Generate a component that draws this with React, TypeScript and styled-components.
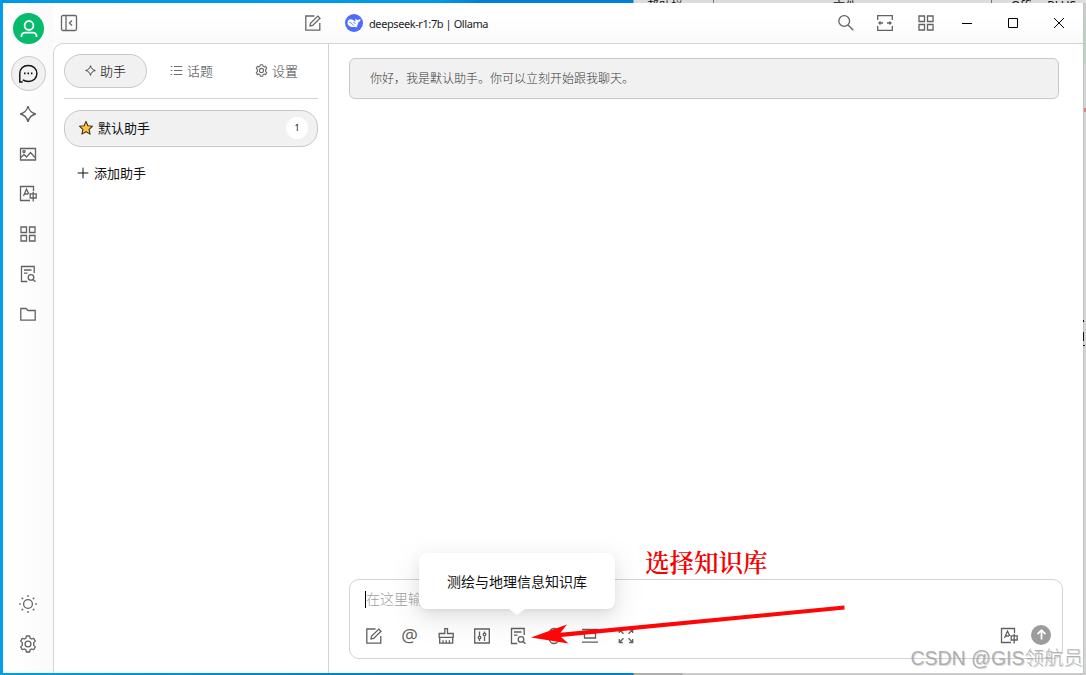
import React from 'react';
import styled, { createGlobalStyle } from 'styled-components';

const GlobalStyle = createGlobalStyle`
  * { box-sizing: border-box; }
  html, body { margin: 0; height: 100%; overflow: hidden; }
  body { font-family: "Noto Sans", "Noto Sans CJK SC", sans-serif; font-size: 13px; color: #111; }
`;

const Desktop = styled.div`
  position: relative;
  width: 1086px;
  height: 675px;
  padding: 3px;
  overflow: hidden;
  background: linear-gradient(90deg, #009fe8 0, #0092e2 300px, #007fd6 633px, #d4d6d5 634px);
`;

const Backdrop = styled.div<{ $top?: boolean }>`
  position: absolute;
  left: 0;
  right: 0;
  ${(p) => (p.$top ? 'top: 0;' : 'bottom: 0;')}
  height: ${(p) => (p.$top ? 3 : 2)}px;
  background: ${(p) =>
    p.$top
      ? 'linear-gradient(90deg, #0098e4 0, #009ae6 440px, #0080d8 480px, #0080d8 633px, #dcdcdc 634px)'
      : 'linear-gradient(90deg, #009fe4 0, #0080c8 400px, #0080c8 633px, #adadad 634px, #adadad 682px, #cbcbcb 683px)'};
`;

const BackText = styled.span<{ $x: number; $y: number }>`
  position: absolute;
  left: ${(p) => p.$x}px;
  top: ${(p) => p.$y}px;
  font-size: 12px;
  line-height: 14px;
  color: #111;
  white-space: nowrap;
`;

const BackRule = styled.i<{ $x: number }>`
  position: absolute;
  left: ${(p) => p.$x}px;
  top: 0;
  width: 1px;
  height: 3px;
  background: #777;
`;

const RightEdge = styled.div`
  position: absolute;
  right: 0;
  top: 3px;
  width: 3px;
  height: 670px;
  overflow: hidden;
  background: linear-gradient(#cccecd 0 14px, #bfd2c8 14px 61px, #d2d4d3 61px 105px, #d98488 105px 109px, #d3d5d4 109px);
  box-shadow: inset 1px 0 #c2c4c3;
`;

const EdgeText = styled.div`
  position: absolute;
  top: 314px;
  right: 0;
  width: 3px;
  height: 29px;
  background: linear-gradient(#111, #111) 0 3px / 1px 2px no-repeat,
    linear-gradient(#111, #111) 0 15px / 1px 9px no-repeat,
    linear-gradient(#111, #111) 0 28px / 2px 1px no-repeat;
`;

const Window = styled.main`
  position: relative;
  display: grid;
  grid-template: 40px 630px / 50px 1030px;
  width: 1080px;
  height: 670px;
  background: #fff;
`;

const Rail = styled.nav`
  grid-row: 1 / 3;
  display: flex;
  flex-direction: column;
  align-items: center;
  gap: 5px;
  padding: 9px 0 12px;
  background: linear-gradient(90deg, #fff 20%, #fafafa);
`;

const Avatar = styled.div`
  display: grid;
  place-items: center;
  flex: none;
  width: 31px;
  height: 31px;
  margin: 1px 0 7px 1px;
  border-radius: 50%;
  background: #06bb6b;
  color: #fff;
`;

const RailButton = styled.button<{ $active?: boolean }>`
  display: grid;
  place-items: center;
  width: 35px;
  height: 35px;
  flex: none;
  margin-left: 1px;
  padding: 0 1px 0 0;
  border: 1px solid ${(p) => (p.$active ? '#c8c8c8' : 'transparent')};
  border-radius: 50%;
  color: ${(p) => (p.$active ? '#111' : '#626262')};
  background: ${(p) => (p.$active ? '#f1f1f1' : 'transparent')};
`;

const Spacer = styled.div`
  flex: 1;
`;

const Header = styled.header`
  display: flex;
  align-items: center;
  background: linear-gradient(#fff 30%, #fafafa);
`;

const HeaderSide = styled.div`
  display: flex;
  align-items: center;
  justify-content: space-between;
  width: 276px;
  padding: 0 7px;
  color: #666;
`;

const ModelName = styled.div`
  display: flex;
  align-items: center;
  gap: 6px;
  padding-left: 16px;
  font-size: 11px;
  letter-spacing: -0.41px;
  color: #1b1b1b;
`;

const HeaderTools = styled.div`
  display: flex;
  align-items: center;
  margin-left: auto;
`;

const HeaderTool = styled.button<{ $w: number; $dark?: boolean }>`
  display: grid;
  place-items: center;
  width: ${(p) => p.$w}px;
  height: 40px;
  padding: 0;
  border: 0;
  background: none;
  color: ${(p) => (p.$dark ? '#000' : '#626262')};
`;

const Body = styled.div`
  display: grid;
  grid-template-columns: 275px 1fr;
  border: solid #d3d3d3;
  border-width: 1px 0 0 1px;
  border-top-left-radius: 10px;
  background: #fff;
`;

const SidePanel = styled.aside`
  padding: 10px 10px 0;
  border-right: 1px solid #d3d3d3;
`;

const Tabs = styled.div`
  display: flex;
  height: 45px;
  border-bottom: 1px solid #d3d3d3;
`;

const Tab = styled.button<{ $active?: boolean; $w: number }>`
  display: flex;
  align-items: center;
  justify-content: center;
  gap: 4px;
  width: ${(p) => p.$w}px;
  height: 34px;
  padding: 0 0 1px;
  border: 1px solid ${(p) => (p.$active ? '#c8c8c8' : 'transparent')};
  border-radius: 17px;
  background: ${(p) => (p.$active ? '#f1f1f1' : 'transparent')};
  color: ${(p) => (p.$active ? '#000' : '#3c3c3c')};
  font: inherit;
  font-weight: 300;
  svg { opacity: 0.75; }
`;

const AssistantRow = styled.div`
  display: flex;
  align-items: center;
  height: 37px;
  margin-top: 11px;
  padding: 0 9px 2px 13px;
  border: 1px solid #c8c8c8;
  border-radius: 17px;
  background: #f1f1f1;
  gap: 4px;
  svg { margin-top: 1px; }
`;

const Count = styled.span`
  display: grid;
  place-items: center;
  width: 22px;
  height: 22px;
  margin-left: auto;
  margin-top: 1px;
  padding-bottom: 1px;
  border-radius: 50%;
  background: #fff;
  font-size: 9px;
`;

const AddRow = styled.div`
  display: flex;
  align-items: center;
  gap: 5px;
  height: 34px;
  margin-top: 8px;
  padding-left: 13px;
  svg { margin-top: 1px; }
`;

const Chat = styled.section`
  display: flex;
  flex-direction: column;
  justify-content: space-between;
  padding: 14px 20px 14px;
`;

const Greeting = styled.div`
  width: 710px;
  height: 41px;
  padding-left: 20px;
  border: 1px solid #c9c9c9;
  border-radius: 6px;
  background: #f1f1f1;
  color: #3a3a3a;
  font-size: 12px;
  font-weight: 300;
  line-height: 39px;
`;

const Composer = styled.div`
  position: relative;
  width: 714px;
  height: 80px;
  padding: 11px 11px 0 15px;
  border: 1px solid #d3d3d3;
  border-radius: 10px;
`;

const Prompt = styled.div`
  height: 17px;
  border-left: 1px solid #000;
  color: #a0a0a0;
  font-size: 14px;
  font-weight: 300;
  line-height: 16px;
`;

const Toolbar = styled.div`
  display: flex;
  align-items: center;
  height: 34px;
  margin: 11px 0 0 -9.5px;
  color: #606060;
`;

const ToolButton = styled.button`
  display: grid;
  place-items: center;
  width: 36px;
  height: 34px;
  padding: 0;
  border: 0;
  background: none;
  color: inherit;
`;

const AtSign = styled.span`
  margin-top: -2px;
  font: 400 18.5px/18px "Open Sans", "Noto Sans", sans-serif;
`;

const Send = styled.div`
  display: grid;
  place-items: center;
  width: 20px;
  height: 20px;
  margin: -3px 0 0 4px;
  border-radius: 50%;
  background: #9c9c9c;
  color: #fff;
`;

const Popover = styled.div`
  position: absolute;
  left: 69px;
  top: -27px;
  width: 196px;
  height: 56px;
  border-radius: 8px;
  background: #fff;
  box-shadow: 0 6px 16px rgba(0, 0, 0, 0.08), 0 3px 6px -4px rgba(0, 0, 0, 0.12), 0 9px 28px 8px rgba(0, 0, 0, 0.05);
  font-size: 14px;
  line-height: 57px;
  text-align: center;
  &::after {
    content: '';
    position: absolute;
    left: 90px;
    top: 56px;
    border: solid transparent;
    border-width: 6px 8px 0;
    border-top-color: #fff;
  }
`;

const Annotation = styled.div`
  position: absolute;
  left: 645px;
  top: 544px;
  color: #f50000;
  font: 600 24.5px/36px "Noto Serif CJK SC", "Liberation Serif", "Noto Sans CJK SC", serif;
`;

const Pointer = styled.svg`
  position: absolute;
  left: 525px;
  top: 600px;
`;

const Watermark = styled.div`
  position: absolute;
  right: 3px;
  top: 644px;
  color: rgba(165, 165, 165, 0.85);
  font: 19.5px/28px "Liberation Sans", "Noto Sans CJK SC", sans-serif;
  font-weight: 300;
  white-space: nowrap;
  text-shadow: 1px 1px 0 rgba(130, 130, 130, 0.3);
`;

const COG =
  'M7.4 1h3.2l.5 2.1 1.5.9 2.1-.7 1.6 2.8-1.6 1.5v2.8l1.6 1.5-1.6 2.8-2.1-.7-1.5.9-.5 2.1H7.4l-.5-2.1-1.5-.9-2.1.7-1.6-2.8 1.6-1.5V7.6L1.7 6.1l1.6-2.8 2.1.7 1.5-.9z';

const glyphs: Record<string, React.ReactNode> = {
  user: (
    <>
      <circle cx="9" cy="5.4" r="4.4" />
      <path d="M1.5 17v-.8c0-2.4 1.700-3.600 3.900-3.600h7.200c2.200 0 3.900 1.200 3.900 3.600v.8" />
    </>
  ),
  chat: (
    <>
      <path d="M1.600 16.400V8.500C1.600 4.200 4.700 1.300 9.200 1.300s7.800 3 7.800 7.200-3.100 7.200-7.600 7.200c-2.100 0-3.800-.5-5-1.400M1 16.200h3.200" />
      <path d="M5.400 8.500h1.400M8.500 8.500h1.400M11.600 8.500H13" strokeWidth="1.500" />
    </>
  ),
  spark: <path d="M9 1.200c1 4.300 3.500 6.800 7.800 7.800C12.500 10 10 12.500 9 16.800 8 12.500 5.500 10 1.200 9 5.500 8 8 5.500 9 1.200z" />,
  image: (
    <>
      <path d="M1.500 3.500h15v11.500h-15z" />
      <circle cx="5" cy="6.500" r="1.100" />
      <path d="M2 12.500l3-3 2.500 2.500 4-4.500 4.500 5" />
    </>
  ),
  translate: (
    <>
      <path d="M14.500 6V1.500H1.500v14H11" />
      <path d="M4.500 11L7.500 4l2.300 5M5.500 9h3.500M11.200 8.800h6v4.200h-6zM14.200 6.800v9.700" />
    </>
  ),
  grid: <path d="M2 2h5.500v5.500H2zM10.500 2H16v5.500h-5.500zM2 10.500h5.500V16H2zM10.500 10.500H16V16h-5.500z" />,
  docSearch: (
    <>
      <path d="M15.200 8V1.500H2.500v15h5.800M5 5h7.500M5 8.200h3.500" />
      <circle cx="12" cy="12.400" r="2.800" />
      <path d="M14.100 14.500l2.300 2.300" />
    </>
  ),
  folder: <path d="M1.800 3.500H7l2 2h7.200v9.700H1.800z" />,
  sun: (
    <>
      <circle cx="9" cy="9" r="4.400" />
      <path d="M9 .2v1.600M9 16.200v1.600M.2 9h1.600M16.200 9h1.600M2.800 2.800l1.200 1.200M14 14l1.200 1.200M2.800 15.200L4 14M14 4l1.200-1.200" strokeWidth="1.700" />
    </>
  ),
  cog: (
    <>
      <path d={COG} strokeLinejoin="round" />
      <circle cx="9" cy="9" r="2.900" />
    </>
  ),
  panel: (
    <>
      <rect x="1.500" y="1.500" width="15" height="15" rx="1.500" />
      <path d="M6 1.500v15M12 6.500L9.500 9l2.500 2.500" />
    </>
  ),
  edit: (
    <>
      <path d="M10.500 2H1.800v14.200h14V9" />
      <path d="M6 12l.5-2.700 7.300-7.200 2.200 2.200-7.300 7.200z" />
    </>
  ),
  search: (
    <>
      <circle cx="7.200" cy="7" r="5.400" />
      <path d="M11 11l5.300 5.300" />
    </>
  ),
  width: (
    <>
      <path d="M1.700 6V1.700h14.600V6M1.700 12v4.300h14.600V12" />
      <path d="M3 9h4M11 9h4M4.500 7.500L3 9l1.500 1.500M13.500 7.500L15 9l-1.500 1.500" />
    </>
  ),
  min: <path d="M4 9.500h10" strokeWidth="1" />,
  max: <path d="M4.500 4.500h9v9h-9z" strokeWidth="1" />,
  close: <path d="M4 4l10 10M14 4L4 14" strokeWidth="1" />,
  list: <path d="M1 3.500h2M1 9h2M1 14.500h2M5.500 3.500H17M5.500 9H17M5.500 14.500H17" />,
  plus: <path d="M9 1v16M1 9h16" />,
  broom: (
    <>
      <path d="M7.800 6.500V1.700h2.700v4.800h5.700v3.800H2.200V6.500zM2.700 10.300v5.900h13v-5.900" />
      <path d="M6 16.200v-3M9.200 16.200v-3M12.400 16.200v-3" />
    </>
  ),
  sliders: (
    <>
      <path d="M1.700 2h14.600v14H1.700zM6.500 4.500v5M6.500 12v2M11.500 4.500v2M11.500 9.500V14" />
      <circle cx="6.500" cy="10.500" r="1.300" />
      <circle cx="11.500" cy="7.500" r="1.300" />
    </>
  ),
  clip: (
    <>
      <rect x="4.500" y="1.500" width="9" height="15" rx="4.500" />
      <path d="M9 5v7" />
    </>
  ),
  newTopic: <path d="M1 2.500h16M3.500 6h11v5h-11zM1 15.200h16" />,
  expand: (
    <path d="M2.300 6V2.500h3.500M2.500 2.700l4 4M12.200 2.500h3.500V6M15.500 2.700l-4 4M2.300 12v3.500h3.500M2.500 15.300l4-4M15.700 12v3.500h-3.500M15.500 15.300l-4-4" />
  ),
  up: <path d="M9 16V3M3.500 8.500L9 3l5.500 5.500" />,
};

function Icon({ name, size = 18, weight = 1.3 }: { name: string; size?: number; weight?: number }) {
  return (
    <svg width={size} height={size} viewBox="0 0 18 18" fill="none" stroke="currentColor" strokeWidth={weight}>
      {glyphs[name]}
    </svg>
  );
}

function Star() {
  return (
    <svg width="16" height="16" viewBox="0 0 16 16">
      <path d="M8 1.400l1.900 4.300 4.700.5-3.500 3.200 1 4.700L8 11.700l-4.100 2.400 1-4.700L1.400 6.200l4.700-.5z" fill="#ffc23d" stroke="#3d3528" strokeWidth="1.100" strokeLinejoin="round" />
    </svg>
  );
}

function WhaleLogo() {
  return (
    <svg width="18" height="18" viewBox="0 0 18 18">
      <circle cx="9" cy="9" r="9" fill="#4d6bfe" />
      <path d="M2.500 8.700c0-2.700 2.100-3.800 4.500-3.200 1.200.3 2 .9 2.700 1.800.6.500.9.300.7-.5-.2-.8-.2-1.600.2-2.300.5 1.100 1.300 1.500 2.300 1.400.9-.1 1.600-.6 2.600-.8 0 1.900-.9 2.900-2.200 3.200-.1 1.700-.7 3-1.700 3.900.6.500 1 .6.9.9-1 .5-2 .1-2.900-.4-3.700 1-7.100-.9-7.100-4z" fill="#fff" />
      <path d="M4.300 8.500c2-.3 2.900 1.800 4.300 3.100M8.300 8.300c1 .1 1.700.7 2 1.600" stroke="#4d6bfe" strokeWidth=".9" fill="none" />
    </svg>
  );
}

const railItems = ['chat', 'spark', 'image', 'translate', 'grid', 'docSearch', 'folder'];
const tools = ['edit', 'at', 'broom', 'sliders', 'docSearch', 'clip', 'newTopic', 'expand'];

export default function App() {
  return (
    <>
      <GlobalStyle />
      <Desktop>
        <Backdrop $top>
          <BackText $x={647} $y={0}>帮助栏</BackText>
          <BackRule $x={713} />
          <BackText $x={833} $y={0}>文件</BackText>
          <BackRule $x={991} />
          <BackText $x={1011} $y={-1}>Office PLUS</BackText>
        </Backdrop>
        <Backdrop />
        <RightEdge>
          <EdgeText />
        </RightEdge>
        <Window>
          <Rail>
            <Avatar>
              <Icon name="user" weight={1.8} />
            </Avatar>
            {railItems.map((name, i) => (
              <RailButton key={name} $active={i === 0}>
                <Icon name={name} size={i === 0 ? 20 : 18} />
              </RailButton>
            ))}
            <Spacer />
            <RailButton><Icon name="sun" /></RailButton>
            <RailButton><Icon name="cog" /></RailButton>
          </Rail>
          <Header>
            <HeaderSide>
              <Icon name="panel" />
              <Icon name="edit" />
            </HeaderSide>
            <ModelName>
              <WhaleLogo />
              <span>deepseek-r1:7b | Ollama</span>
            </ModelName>
            <HeaderTools>
              <HeaderTool $w={38}><Icon name="search" /></HeaderTool>
              <HeaderTool $w={40}><Icon name="width" /></HeaderTool>
              <HeaderTool $w={42}><Icon name="grid" /></HeaderTool>
              <HeaderTool $w={40} $dark><Icon name="min" /></HeaderTool>
              <HeaderTool $w={52} $dark><Icon name="max" /></HeaderTool>
              <HeaderTool $w={40} $dark><Icon name="close" /></HeaderTool>
              <HeaderTool $w={4} />
            </HeaderTools>
          </Header>
          <Body>
            <SidePanel>
              <Tabs>
                <Tab $active $w={83}><Icon name="spark" size={11} weight={1.6} />助手</Tab>
                <Tab $w={89}><Icon name="list" size={13} weight={1.4} />话题</Tab>
                <Tab $w={81}><Icon name="cog" size={13} weight={1.5} />设置</Tab>
              </Tabs>
              <AssistantRow>
                <Star />
                默认助手
                <Count>1</Count>
              </AssistantRow>
              <AddRow>
                <Icon name="plus" size={12} weight={1.5} />
                添加助手
              </AddRow>
            </SidePanel>
            <Chat>
              <Greeting>你好，我是默认助手。你可以立刻开始跟我聊天。</Greeting>
              <Composer>
                <Prompt>在这里输入消息</Prompt>
                <Toolbar>
                  {tools.map((name) => (
                    <ToolButton key={name}>
                      {name === 'at' ? <AtSign>@</AtSign> : <Icon name={name} />}
                    </ToolButton>
                  ))}
                  <Spacer />
                  <ToolButton><Icon name="translate" /></ToolButton>
                  <Send><Icon name="up" size={13} weight={2.4} /></Send>
                </Toolbar>
                <Popover>测绘与地理信息知识库</Popover>
              </Composer>
            </Chat>
          </Body>
        </Window>
        <Annotation>选择知识库</Annotation>
        <Pointer width="325" height="50" viewBox="0 0 325 50">
          <path d="M6 37.500L42 24.500 35.500 32.700 319.300 5.600 319.600 9.400 36 37 43.500 43.500z" fill="#ff0505" />
        </Pointer>
        <Watermark>CSDN @GIS领航员</Watermark>
      </Desktop>
    </>
  );
}
